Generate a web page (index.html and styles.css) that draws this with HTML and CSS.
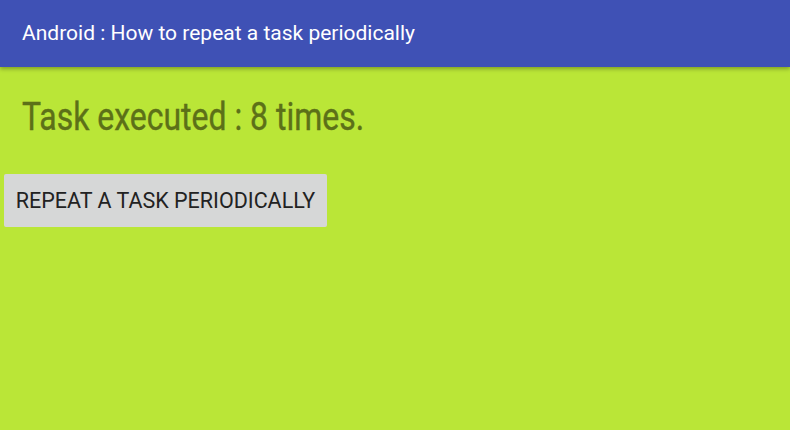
FILE: index.html
```html
<!DOCTYPE html>
<html lang="en">
<head>
  <meta charset="UTF-8" />
  <meta name="viewport" content="width=device-width, initial-scale=1.0" />
  <title>Android : How to repeat a task periodically</title>
  <link rel="stylesheet" href="styles.css">
</head>
<body>

  <header class="toolbar">
    <span class="toolbar-title">Android : How to repeat a task periodically</span>
  </header>

  <div class="content">
    <div class="counter">Task executed : 8 times.</div>
    <button class="btn">Repeat a task periodically</button>
  </div>

</body>
</html>
```

FILE: styles.css
```css
body {
  margin: 0;
  background: #bae637;
  font-family: Roboto, 'Noto Sans', sans-serif;
  overflow: hidden;
  height: 430px;
}

.toolbar {
  height: 67px;
  background: #3f51b5;
  display: flex;
  align-items: center;
  padding: 0 22px;
  box-shadow: 0 2px 4px rgba(0, 0, 0, 0.3);
  position: relative;
  z-index: 1;
}

.toolbar-title {
  color: #fff;
  font-size: 21px;
  margin-top: -2px;
}

.content {
  padding: 26px 4px 0;
}

.counter {
  display: inline-block;
  margin-left: 18px;
  font-size: 38.5px;
  color: #5c7018;
  transform: scaleX(0.83);
  transform-origin: left center;
  white-space: nowrap;
  line-height: 48px;
  -webkit-text-stroke: 0.4px #5c7018;
}

.btn {
  display: block;
  margin-top: 33px;
  width: 323px;
  height: 53px;
  border: 0;
  border-radius: 2px;
  background: #d6d7d7;
  color: #222;
  font-family: Roboto, 'Noto Sans', sans-serif;
  font-size: 21.5px;
  text-transform: uppercase;
  padding: 0;
}
```
